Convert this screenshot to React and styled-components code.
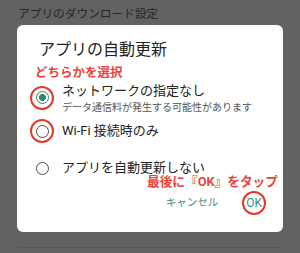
import React from "react"
import styled, { createGlobalStyle } from "styled-components"

const GlobalStyle = createGlobalStyle`
  html, body {
    margin: 0;
    padding: 0;
    background: #626262;
  }
  body {
    width: 300px;
    height: 253px;
    overflow: hidden;
    font-family: Roboto, "Noto Sans CJK JP", sans-serif;
  }
`

const options = [
  {
    label: "ネットワークの指定なし",
    note: "データ通信料が発生する可能性があります",
    checked: true,
    marked: true,
    top: 1,
  },
  { label: "Wi-Fi 接続時のみ", marked: true, top: 7 },
  { label: "アプリを自動更新しない", top: 19 },
]

const App = () => {
  return (
    <Page>
      <GlobalStyle />
      <Header>アプリのダウンロード設定</Header>

      <Dialog>
        <Title>アプリの自動更新</Title>
        <Hint>どちらかを選択</Hint>

        {options.map((o) => (
          <Option key={o.label} $top={o.top}>
            <Radio $checked={o.checked} $marked={o.marked} />
            <Texts>
              <Label>{o.label}</Label>
              {o.note && <Note>{o.note}</Note>}
            </Texts>
          </Option>
        ))}

        <HintRight>最後に『OK』をタップ</HintRight>

        <Actions>
          <TextButton>キャンセル</TextButton>
          <TextButton $marked>OK</TextButton>
        </Actions>
      </Dialog>

      <Divider />
    </Page>
  )
}

const Page = styled.div`
  width: 300px;
  height: 253px;
  background: #626262;
`

const Header = styled.div`
  height: 25px;
  box-sizing: border-box;
  padding: 7px 0 0 18px;
  font-size: 11.7px;
  line-height: 14px;
  color: #262626;
  white-space: nowrap;
`

const Dialog = styled.div`
  margin: 0 17px;
  height: 207px;
  box-sizing: border-box;
  background: #fff;
  border-radius: 6px;
  padding-top: 15px;
  display: flex;
  flex-direction: column;
`

const Title = styled.div`
  padding-left: 22px;
  font-size: 16px;
  line-height: 20px;
  color: #222;
`

const Hint = styled.div`
  margin-top: 5px;
  padding-left: 18px;
  font-size: 12.5px;
  line-height: 16px;
  font-weight: 700;
  color: #e8453a;
`

const HintRight = styled(Hint)`
  margin-top: 0;
  padding: 0 5px 0 0;
  line-height: 10px;
  font-size: 12.7px;
  text-align: right;
  white-space: nowrap;
`

const Option = styled.div`
  margin-top: ${(p) => p.$top}px;
  padding-left: 17px;
  display: flex;
  align-items: center;
  gap: 12px;
  min-height: 18px;
`

const Radio = styled.span`
  position: relative;
  flex: none;
  width: 16px;
  height: 16px;
  display: flex;
  align-items: center;
  justify-content: center;
  margin-top: ${(p) => (p.$checked ? "-2px" : "0")};

  &::before {
    content: "";
    width: 13px;
    height: 13px;
    box-sizing: border-box;
    border-radius: 50%;
    border: 1.7px solid ${(p) => (p.$checked ? "#2f8c68" : "#4a4a4a")};
    background: ${(p) =>
      p.$checked
        ? "radial-gradient(circle, #2f8c68 0 3.2px, transparent 3.7px)"
        : "transparent"};
  }

  &::after {
    content: "";
    display: ${(p) => (p.$marked ? "block" : "none")};
    position: absolute;
    left: -4px;
    top: -4px;
    width: 24px;
    height: 24px;
    box-sizing: border-box;
    border-radius: 50%;
    border: 2.6px solid #e2392b;
  }
`

const Texts = styled.div`
  display: flex;
  flex-direction: column;
  gap: 1px;
`

const Label = styled.div`
  font-size: 13px;
  line-height: 18px;
  color: #222;
  white-space: nowrap;
`

const Note = styled.div`
  font-size: 10px;
  line-height: 14px;
  color: #555;
  white-space: nowrap;
`

const Actions = styled.div`
  margin-top: 4px;
  height: 24px;
  display: flex;
  align-items: center;
  justify-content: flex-end;
  gap: 28px;
  padding-right: 21px;
`

const TextButton = styled.span`
  position: relative;
  font-size: ${(p) => (p.$marked ? "12px" : "10.5px")};
  line-height: 14px;
  color: #3f8f80;

  &::after {
    content: "";
    display: ${(p) => (p.$marked ? "block" : "none")};
    position: absolute;
    left: 50%;
    top: 50%;
    width: 24px;
    height: 24px;
    margin: -12px 0 0 -12px;
    box-sizing: border-box;
    border-radius: 50%;
    border: 2.6px solid #e2392b;
  }
`

const Divider = styled.div`
  margin: 15px 18px 0;
  height: 1px;
  background: #575757;
`

export default App
